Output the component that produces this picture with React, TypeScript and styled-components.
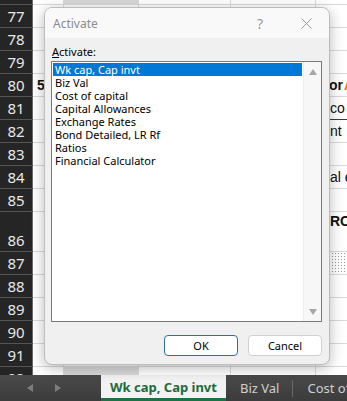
import React from "react";
import styled, { createGlobalStyle } from "styled-components";

const GlobalStyle = createGlobalStyle`
    html, body {
        margin: 0;
        padding: 0;
        background: #ffffff;
        overflow: hidden;
    }
`;

const UI_FONT = `"Noto Sans", "Open Sans", sans-serif`;
const SHEET_FONT = `"Liberation Sans", Arial, sans-serif`;

const Screen = styled.div`
    position: relative;
    width: 347px;
    height: 401px;
    overflow: hidden;
    display: flex;
    flex-direction: column;
    background: #ffffff;
`;

const Sheet = styled.div`
    flex: 1;
    overflow: hidden;
`;

const Rows = styled.div`
    margin-top: -18px;
`;

const Row = styled.div<{ $h: number }>`
    display: flex;
    height: ${p => p.$h}px;
`;

const RowHeader = styled.div<{ $bottom?: boolean }>`
    width: 33px;
    flex: none;
    box-sizing: border-box;
    background: #252525;
    border-bottom: 1px solid #555555;
    border-right: 1px solid #6a6a6a;
    color: #e8e8e8;
    font: 15px ${UI_FONT};
    display: flex;
    justify-content: center;
    align-items: ${p => (p.$bottom ? "flex-end" : "center")};
    padding-bottom: ${p => (p.$bottom ? "1px" : "0")};
`;

const Cell = styled.div<{ $w: number; $fill?: string; $bold?: boolean; $indent?: number; $dark?: boolean; $dots?: boolean; $flag?: boolean; $top?: boolean }>`
    position: relative;
    width: ${p => p.$w}px;
    flex: none;
    box-sizing: border-box;
    border-right: 1px solid #dadada;
    border-bottom: 1px solid ${p => (p.$dark ? "#3a3a3a" : "#dadada")};
    background: ${p => p.$fill || "#ffffff"};
    ${p => p.$dots && `
        background-image: radial-gradient(#9a9a9a 0.6px, transparent 0.9px);
        background-size: 3px 3px;
    `}
    font: ${p => (p.$bold ? "bold 14px" : "14px")} ${SHEET_FONT};
    color: #111111;
    white-space: nowrap;
    padding-left: ${p => p.$indent ?? 2}px;
    padding-top: ${p => (p.$top ? "1px" : "0")};
    display: flex;
    align-items: ${p => (p.$top ? "flex-start" : "center")};
    ${p => p.$flag && `
        &::after {
            content: "";
            position: absolute;
            top: 0;
            right: -8px;
            border-top: 7px solid #1e7145;
            border-left: 7px solid transparent;
        }
    `}
`;

const Accent = styled.span`
    color: #e07b00;
    margin-left: 1px;
`;

const TabBar = styled.div`
    height: 26px;
    flex: none;
    display: flex;
    background: linear-gradient(#4a4a4a, #3c3c3c);
    font: 13px ${UI_FONT};
`;

const Nav = styled.div`
    width: 101px;
    flex: none;
    display: flex;
    align-items: center;
    gap: 20px;
    padding-left: 26px;
    box-sizing: border-box;
`;

const Tab = styled.div<{ $active?: boolean; $sep?: boolean }>`
    flex: none;
    display: flex;
    align-items: center;
    padding: 0 ${p => (p.$active ? "9px" : "14px")};
    box-sizing: border-box;
    color: ${p => (p.$active ? "#1d6b3c" : "#cfcfcf")};
    font-weight: ${p => (p.$active ? 700 : 400)};
    background: ${p => (p.$active ? "#f2f2f2" : "transparent")};
    border-bottom: ${p => (p.$active ? "3px solid #1e7145" : "none")};
    white-space: nowrap;
    position: relative;
    ${p => p.$sep && `
        &::after {
            content: "";
            position: absolute;
            right: 0;
            top: 5px;
            bottom: 4px;
            width: 1px;
            background: #6a6a6a;
        }
    `}
`;

const Dialog = styled.div`
    position: absolute;
    left: 44px;
    top: 7px;
    width: 286px;
    height: 358px;
    box-sizing: border-box;
    border: 1px solid #bcbcbc;
    border-radius: 8px;
    background: #f0f0f0;
    box-shadow: 0 3px 14px rgba(0, 0, 0, 0.28);
    display: flex;
    flex-direction: column;
    overflow: hidden;
    font: 11px ${UI_FONT};
`;

const TitleBar = styled.div`
    height: 30px;
    flex: none;
    display: flex;
    align-items: center;
    padding-left: 8px;
    background: #f9f9f9;
    color: #8c8c8c;
    font-size: 12px;
`;

const Title = styled.div`
    flex: 1;
`;

const TitleButton = styled.div`
    width: 46px;
    height: 30px;
    display: flex;
    align-items: center;
    justify-content: center;
    color: #9a9a9a;
    font-size: 14px;
`;

const Body = styled.div`
    flex: 1;
    display: flex;
    flex-direction: column;
    padding: 6px 7px 7px 6px;
`;

const Label = styled.div`
    color: #000000;
    padding-left: 1px;
    height: 17px;
    line-height: 15px;
`;

const Hot = styled.span`
    text-decoration: underline;
`;

const ListBox = styled.div`
    height: 261px;
    box-sizing: border-box;
    border: 1px solid #7a7a7a;
    background: #ffffff;
    display: flex;
`;

const Items = styled.div`
    flex: 1;
    padding: 1px;
`;

const Item = styled.div<{ $selected?: boolean }>`
    height: 13px;
    line-height: 13px;
    padding-left: 2px;
    color: ${p => (p.$selected ? "#ffffff" : "#000000")};
    background: ${p => (p.$selected ? "#0078d7" : "transparent")};
    white-space: nowrap;
`;

const ScrollBar = styled.div`
    width: 17px;
    flex: none;
    background: #f7f7f7;
    border-left: 1px solid #ececec;
    display: flex;
    flex-direction: column;
    justify-content: space-between;
    align-items: center;
    padding: 5px 0;
`;

const Buttons = styled.div`
    display: flex;
    justify-content: flex-end;
    gap: 10px;
    margin-top: 13px;
`;

const Button = styled.div<{ $default?: boolean }>`
    width: 74px;
    height: 21px;
    box-sizing: border-box;
    border-radius: 4px;
    border: 1px solid ${p => (p.$default ? "#2e6da8" : "#d0d0d0")};
    background: #ffffff;
    display: flex;
    align-items: center;
    justify-content: center;
    color: #000000;
`;

function Triangle({ dir, color, size }: { dir: "up" | "down" | "left" | "right"; color: string; size: number }) {
    const pts = {
        up: "0,8 4,2 8,8",
        down: "0,1 4,7 8,1",
        left: "7,0 1,4 7,8",
        right: "1,0 7,4 1,8",
    }[dir];
    return (
        <svg width={size} height={size} viewBox="0 0 8 8">
            <polygon points={pts} fill={color} />
        </svg>
    );
}

type SheetRow = {
    n: number;
    h: number;
    a?: React.ReactNode;
    b?: React.ReactNode;
    bFill?: string;
    e?: React.ReactNode;
    eBold?: boolean;
    eDark?: boolean;
    eDots?: boolean;
    eTop?: boolean;
    eIndent?: number;
    dFlag?: boolean;
};

const sheetRows: SheetRow[] = [
    { n: 76, h: 23, b: "", bFill: "#d9d9d9" },
    { n: 77, h: 23 },
    { n: 78, h: 23 },
    { n: 79, h: 23 },
    { n: 80, h: 23, a: <b>5</b>, e: <>or<Accent>A</Accent></>, eBold: true, eIndent: 13 },
    { n: 81, h: 23, e: "co", eDark: true },
    { n: 82, h: 23, e: "nt" },
    { n: 83, h: 23 },
    { n: 84, h: 23, e: "al e" },
    { n: 85, h: 23 },
    { n: 86, h: 40, e: "RO", eBold: true, eTop: true },
    { n: 87, h: 23, eDots: true },
    { n: 88, h: 23 },
    { n: 89, h: 23 },
    { n: 90, h: 23 },
    { n: 91, h: 23 },
    { n: 92, h: 23, bFill: "#d9d9d9", dFlag: true },
];

const sheetNames = [
    "Wk cap, Cap invt",
    "Biz Val",
    "Cost of capital",
    "Capital Allowances",
    "Exchange Rates",
    "Bond Detailed, LR Rf",
    "Ratios",
    "Financial Calculator",
];

export default function App() {
    return (
        <Screen>
            <GlobalStyle />
            <Sheet>
                <Rows>
                    {sheetRows.map(r => (
                        <Row key={r.n} $h={r.h}>
                            <RowHeader $bottom={r.h > 23}>{r.n}</RowHeader>
                            <Cell $w={31} $indent={4}>{r.a}</Cell>
                            <Cell $w={75} $fill={r.bFill}>{r.b}</Cell>
                            <Cell $w={92} />
                            <Cell $w={85} $flag={r.dFlag} />
                            <Cell $w={40} $indent={r.eIndent ?? 14} $bold={r.eBold} $dark={r.eDark} $dots={r.eDots} $top={r.eTop}>{r.e}</Cell>
                        </Row>
                    ))}
                </Rows>
            </Sheet>
            <TabBar>
                <Nav>
                    <Triangle dir="left" color="#7d7d7d" size={8} />
                    <Triangle dir="right" color="#7d7d7d" size={8} />
                </Nav>
                <Tab $active>Wk cap, Cap invt</Tab>
                <Tab $sep>Biz Val</Tab>
                <Tab>Cost of capital</Tab>
            </TabBar>

            <Dialog>
                <TitleBar>
                    <Title>Activate</Title>
                    <TitleButton>?</TitleButton>
                    <TitleButton>
                        <svg width="11" height="11" viewBox="0 0 11 11">
                            <path d="M0.5 0.5 L10.5 10.5 M10.5 0.5 L0.5 10.5" stroke="#9a9a9a" strokeWidth="1" />
                        </svg>
                    </TitleButton>
                </TitleBar>
                <Body>
                    <Label><Hot>A</Hot>ctivate:</Label>
                    <ListBox>
                        <Items>
                            {sheetNames.map((name, i) => (
                                <Item key={name} $selected={i === 0}>{name}</Item>
                            ))}
                        </Items>
                        <ScrollBar>
                            <Triangle dir="up" color="#a6a6a6" size={8} />
                            <Triangle dir="down" color="#a6a6a6" size={8} />
                        </ScrollBar>
                    </ListBox>
                    <Buttons>
                        <Button $default>OK</Button>
                        <Button>Cancel</Button>
                    </Buttons>
                </Body>
            </Dialog>
        </Screen>
    );
}
